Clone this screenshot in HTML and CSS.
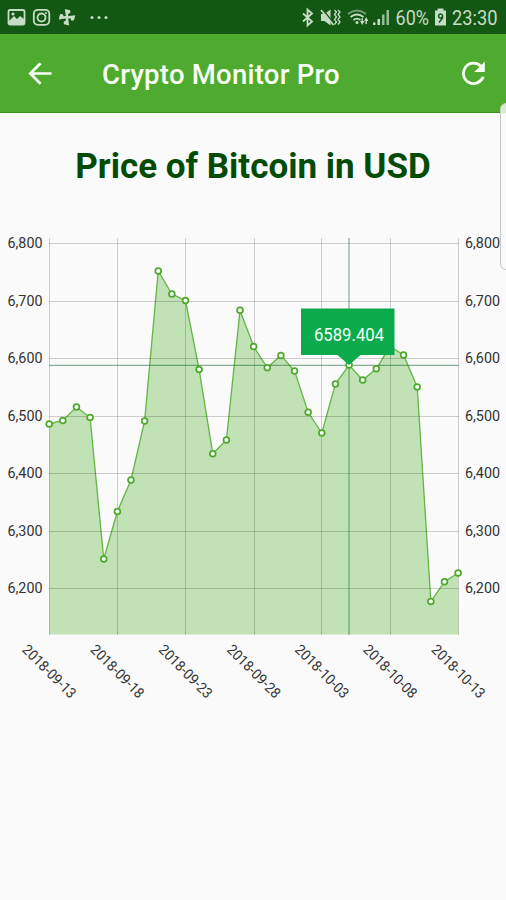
FILE: index.html
```html
<!DOCTYPE html>
<html lang="en">
<head>
<meta charset="utf-8">
<title>Crypto Monitor Pro</title>
<link rel="stylesheet" href="styles.css">
</head>
<body>
<header>
  <div class="status-bar">
    <svg class="status-icons" width="120" height="34" viewBox="0 0 120 34">
      <rect x="8.500" y="10" width="16" height="14.500" rx="1.500" class="stroke"/>
      <path d="M9 21l5-5 3 3 3-3 4 3v5H9z"/><circle cx="13" cy="14" r="1.600"/>
      <rect x="33.800" y="9.800" width="15.500" height="15" rx="4" class="stroke"/>
      <circle cx="41.500" cy="17.500" r="4" class="stroke"/><circle cx="46" cy="13" r="1"/>
      <g transform="translate(67 17.300) rotate(-8)">
        <path d="M-1 0V-8.500L4-6.500V-4L1.500-3V0z"/>
        <path d="M-1 0V-8.500L4-6.500V-4L1.500-3V0z" transform="rotate(90)"/>
        <path d="M-1 0V-8.500L4-6.500V-4L1.500-3V0z" transform="rotate(180)"/>
        <path d="M-1 0V-8.500L4-6.500V-4L1.500-3V0z" transform="rotate(270)"/>
      </g>
      <circle cx="92" cy="17.500" r="1.500"/><circle cx="99" cy="17.500" r="1.500"/><circle cx="106" cy="17.500" r="1.500"/>
    </svg>
    <svg class="status-icons" width="216" height="34" viewBox="290 0 216 34">
      <path class="stroke" d="M303 13.500l9 8-4.500 4v-16l4.500 4-9 8"/>
      <path d="M321 14h3.500l6-4.500v16l-6-4.500H321z"/>
      <path class="slash" d="M322.500 9.500l12.500 15"/>
      <path class="stroke" d="M321 10l12.500 15"/>
      <path class="thin" d="M334.500 10l2 2-2 2.500 2 2.500-2 2.500 2 2.500-2 2.500M338 10l2 2-2 2.500 2 2.500-2 2.500 2 2.500-2 2.500"/>
      <path class="stroke faint" d="M348 14q9-7 18 0"/>
      <path class="stroke" d="M350.500 17q6.500-5 13 0M353.500 20q3.500-2.600 7 0"/>
      <circle cx="357" cy="22.500" r="1.500"/>
      <path d="M360 21h1.600v-3h1.300v3h1.600l-2.200 4zM366.200 17l2 4h-1.300v3h-1.400v-3h-1.300z"/>
      <path d="M373 22.500h2.500V25H373zM377.500 19h2.500v6h-2.500z"/>
      <path class="bar" d="M382 14.500h2.500V25H382zM386.500 10h2.500v15h-2.500z"/>
      <text x="395.500" y="25" textLength="33.500" lengthAdjust="spacingAndGlyphs">60%</text>
      <path d="M435 10.500h2.500V8.500h6v2h2.500v15h-11z"/>
      <path class="battery-mark" d="M442.500 16.500a2 2 0 1 1 0-1v2.500l-3.500 4.500"/>
      <text x="452" y="25" textLength="45.500" lengthAdjust="spacingAndGlyphs">23:30</text>
    </svg>
  </div>
  <div class="app-bar">
    <svg class="back" width="24" height="24" viewBox="0 0 24 24"><path d="M23.500 12.500H2M12.500 2.200L2.300 12.500l10.200 10.200"/></svg>
    <span class="app-title">Crypto Monitor Pro</span>
    <svg class="refresh" width="24" height="24" viewBox="0 0 24 24"><path class="arc" d="M20.300 5.600A10.200 10.200 0 1 0 22.200 15.800"/><path class="head" d="M23.800 0.500V11H13.300z"/></svg>
  </div>
</header>
<main>
  <h1>Price of Bitcoin in USD</h1>
  <svg class="chart" width="506" height="500" viewBox="0 220 506 500">
    <g id="series"></g>
    <g id="grid"></g>
    <path class="crosshair" d="M349 238V635M49 365.300H459"/>
    <g id="points"></g>
    <path class="marker" d="M301 308.500H394.500V355H360.500L349 365 337.500 355H301z"/>
    <text class="marker-text" x="314" y="341" textLength="70" lengthAdjust="spacingAndGlyphs">6589.404</text>
    <g id="labels"></g>
  </svg>
</main>
<div class="edge-handle"></div>
<script src="chart.js"></script>
</body>
</html>
```
FILE: styles.css
```css
* { box-sizing: border-box; }
body {
  margin: 0;
  min-height: 900px;
  background: #fafafa;
  font-family: Roboto, sans-serif;
  overflow: hidden;
}
.status-bar {
  height: 34px;
  display: flex;
  justify-content: space-between;
  background: #125713;
}
.status-icons { fill: #c6dcc4; }
.status-icons .stroke { fill: none; stroke: #c6dcc4; stroke-width: 1.8; }
.status-icons .slash { fill: none; stroke: #125713; stroke-width: 1.5; }
.status-icons .thin { fill: none; stroke: #c6dcc4; stroke-width: 1.3; }
.status-icons .faint { opacity: .55; }
.status-icons .bar { opacity: .75; }
.status-icons text { font-size: 20.5px; }
.status-icons .battery-mark { fill: none; stroke: #125713; stroke-width: 1.5; }
.app-bar {
  height: 79px;
  display: flex;
  align-items: center;
  padding: 0 21px 0 28px;
  background: #4fab2f;
  border-bottom: 1px solid #3c9122;
}
.back { fill: none; stroke: #f8fff4; stroke-width: 2.7; }
.app-title {
  flex: 1;
  margin-left: 50px;
  padding-top: 3px;
  font-size: 27.5px;
  font-weight: 500;
  line-height: 32px;
  letter-spacing: .24px;
  white-space: nowrap;
  color: #f8fff4;
}
.refresh .arc { fill: none; stroke: #f8fff4; stroke-width: 2.8; }
.refresh .head { fill: #f8fff4; }
h1 {
  margin: 0;
  height: 107px;
  padding-top: 34px;
  text-align: center;
  font-size: 35px;
  font-weight: 700;
  line-height: 40px;
  white-space: nowrap;
  color: #044b06;
}
.chart { display: block; }
.area { fill: #c0e2b5; }
.line { fill: none; stroke: #64b447; stroke-width: 1.3; }
.grid { fill: none; stroke: #000; stroke-opacity: .18; stroke-width: 1; }
.crosshair { fill: none; stroke: #175f30; stroke-opacity: .5; stroke-width: 1.2; }
.point { fill: #fafff8; stroke: #4fa82e; stroke-width: 1.7; }
.marker { fill: #0bab4d; }
.marker-text { fill: #f1fff4; font-size: 18px; }
.axis { fill: #333; font-size: 14.5px; }
.edge-handle {
  position: absolute;
  top: 103px;
  right: -8px;
  width: 14px;
  height: 167px;
  border: 1px solid #c6c8c6;
  border-radius: 6px;
  background: rgba(250, 250, 250, .8);
}
```
FILE: chart.js
```js
const ys = [424, 420.5, 407, 417.5, 559, 511.5, 480, 421, 271, 294, 300.5,
  369.5, 453.7, 440, 310.2, 346.5, 367.8, 355.5, 371, 412.3, 433, 384, 365,
  380, 368.8, 346.5, 355, 387, 601.5, 581.7, 573];
const pts = ys.map((y, i) => [49.2 + i * 13.63, y]);
const line = pts.map(p => p.join(',')).join(' ');
const put = (id, html) => { document.getElementById(id).innerHTML = html; };

put('series', `<polygon class="area" points="49.2,634.5 ${line} 458.5,634.5"/><polyline class="line" points="${line}"/>`);

const rows = [6800, 6700, 6600, 6500, 6400, 6300, 6200];
const rowY = i => 243.5 + i * 57.5;
const columns = [49.2, 117.3, 185.8, 254.3, 321.5, 390, 458.5];
put('grid', rows.map((v, i) => `<path class="grid" d="M49 ${Math.floor(rowY(i)) + .5}H459"/>`).join('') +
  columns.map(x => `<path class="grid" d="M${Math.floor(x) + .5} 238V635"/>`).join(''));

put('points', pts.map(p => `<circle class="point" cx="${p[0]}" cy="${p[1]}" r="2.9"/>`).join(''));

const dates = ['2018-09-13', '2018-09-18', '2018-09-23', '2018-09-28', '2018-10-03', '2018-10-08', '2018-10-13'];
put('labels', rows.map((v, i) => [7.5, 465].map(x =>
  `<text class="axis" x="${x}" y="${rowY(i) + 4.6}" textLength="35" lengthAdjust="spacingAndGlyphs">${v.toLocaleString('en-US')}</text>`).join('')).join('') +
  dates.map((d, i) => `<text class="axis" transform="translate(${21.3 + i * 68.2} 650.500) rotate(45)" textLength="69" lengthAdjust="spacingAndGlyphs">${d}</text>`).join(''));
```
